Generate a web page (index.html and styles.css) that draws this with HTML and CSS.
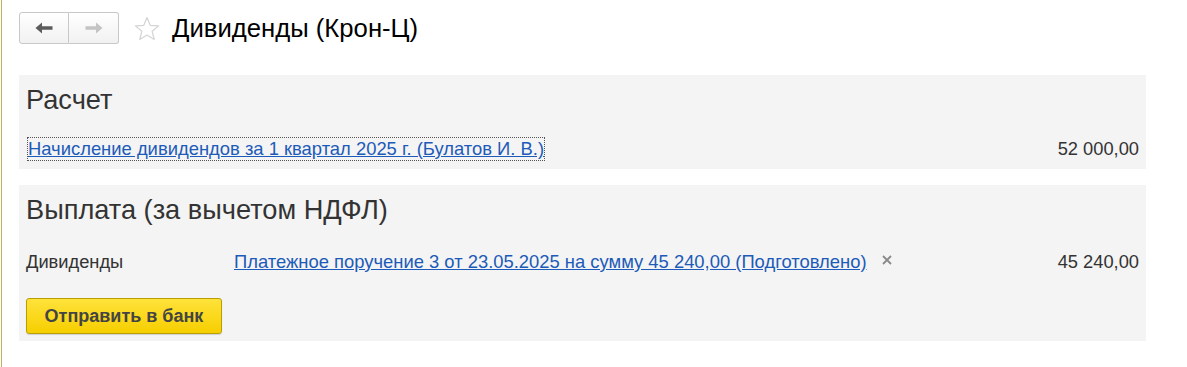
FILE: index.html
```html
<!DOCTYPE html>
<html lang="ru">
<head>
    <meta charset="UTF-8">
    <title>Дивиденды (Крон-Ц)</title>
    <link rel="stylesheet" href="styles.css">
</head>
<body>
    <div class="page">
        <div class="header">
            <div class="nav">
                <button class="nav-btn">
                    <svg width="18" height="12" viewBox="0 0 18 12"><path d="M0.5 6 L7 0.5 L7 4.3 L17.5 4.3 L17.5 7.7 L7 7.7 L7 11.5 Z" fill="#5c5c5c"/></svg>
                </button>
                <button class="nav-btn">
                    <svg width="18" height="12" viewBox="0 0 18 12"><path d="M17.5 6 L11 0.5 L11 4.3 L0.5 4.3 L0.5 7.7 L11 7.7 L11 11.5 Z" fill="#c4c4c4"/></svg>
                </button>
            </div>
            <svg class="star" width="26" height="26" viewBox="0 0 26 26"><path d="M13 1.5 L16.2 9.3 L24.6 9.9 L18.2 15.3 L20.2 23.5 L13 19.1 L5.8 23.5 L7.8 15.3 L1.4 9.9 L9.8 9.3 Z" fill="none" stroke="#d4d4d4" stroke-width="1.2" stroke-linejoin="round"/></svg>
            <h1 class="title">Дивиденды (Крон-Ц)</h1>
        </div>

        <div class="panel panel-calc">
            <div class="panel-title">Расчет</div>
            <div class="row">
                <a href="#" class="link focused">Начисление дивидендов за 1 квартал 2025 г. (Булатов И. В.)</a>
                <span class="amount">52 000,00</span>
            </div>
        </div>

        <div class="panel panel-pay">
            <div class="panel-title">Выплата (за вычетом НДФЛ)</div>
            <div class="row">
                <span class="label">Дивиденды</span>
                <a href="#" class="link">Платежное поручение 3 от 23.05.2025 на сумму 45 240,00 (Подготовлено)</a>
                <span class="clear">
                    <svg width="10" height="10" viewBox="0 0 10 10"><path d="M1 1 L9 9 M9 1 L1 9" stroke="#8a8a8a" stroke-width="1.8"/></svg>
                </span>
                <span class="amount">45 240,00</span>
            </div>
            <button class="bank-btn">Отправить в банк</button>
        </div>
    </div>
</body>
</html>
```

FILE: styles.css
```css
* {
    margin: 0;
    padding: 0;
    box-sizing: border-box;
}

body {
    background: #fff;
    font-family: "Liberation Sans", Arial, sans-serif;
    color: #333;
}

.page {
    margin-left: 1px;
    border-left: 1px solid #c4b060;
    min-height: 367px;
    padding: 12px 41px 0 17px;
}

.header {
    display: flex;
    align-items: center;
    height: 32px;
    margin-bottom: 31px;
}

.nav {
    display: flex;
}

.nav-btn {
    width: 50px;
    height: 32px;
    border: 1px solid #c8c8c8;
    background: linear-gradient(#ffffff, #f1f1f1);
    display: flex;
    align-items: center;
    justify-content: center;
}

.nav-btn:first-child {
    border-radius: 3px 0 0 3px;
}

.nav-btn:last-child {
    border-left: none;
    border-radius: 0 3px 3px 0;
}

.star {
    margin-left: 15px;
    margin-top: 2px;
}

.title {
    font-size: 25.7px;
    font-weight: normal;
    color: #000;
    margin-left: 12px;
}

.panel {
    background: #f4f4f4;
    padding: 10px 7px 0 7px;
}

.panel-calc {
    height: 94px;
    margin-bottom: 16px;
}

.panel-pay {
    height: 156px;
}

.panel-title {
    font-size: 27.2px;
    line-height: 30px;
    height: 30px;
    color: #333;
}

.row {
    display: flex;
    align-items: center;
    height: 26px;
    font-size: 18.3px;
    margin-top: 21px;
}

.panel-pay .row {
    margin-top: 24px;
}

.link {
    color: #1c5bb8;
    text-decoration: underline;
    font-size: 18.4px;
}

.focused {
    outline: 1px dotted #555;
    outline-offset: 0;
    margin-left: 2px;
}

.label {
    width: 208px;
    color: #333;
}

.clear {
    display: flex;
    margin-left: 15px;
    margin-top: -4px;
}

.amount {
    margin-left: auto;
    color: #333;
}

.bank-btn {
    margin-top: 23px;
    width: 196px;
    height: 36px;
    border: 1px solid #b99e00;
    border-radius: 3px;
    background: linear-gradient(#ffe23b, #f6cf00);
    box-shadow: 0 1px 1px rgba(0, 0, 0, 0.15);
    font-family: "Liberation Sans", Arial, sans-serif;
    font-size: 18px;
    font-weight: bold;
    color: #444;
}
```
